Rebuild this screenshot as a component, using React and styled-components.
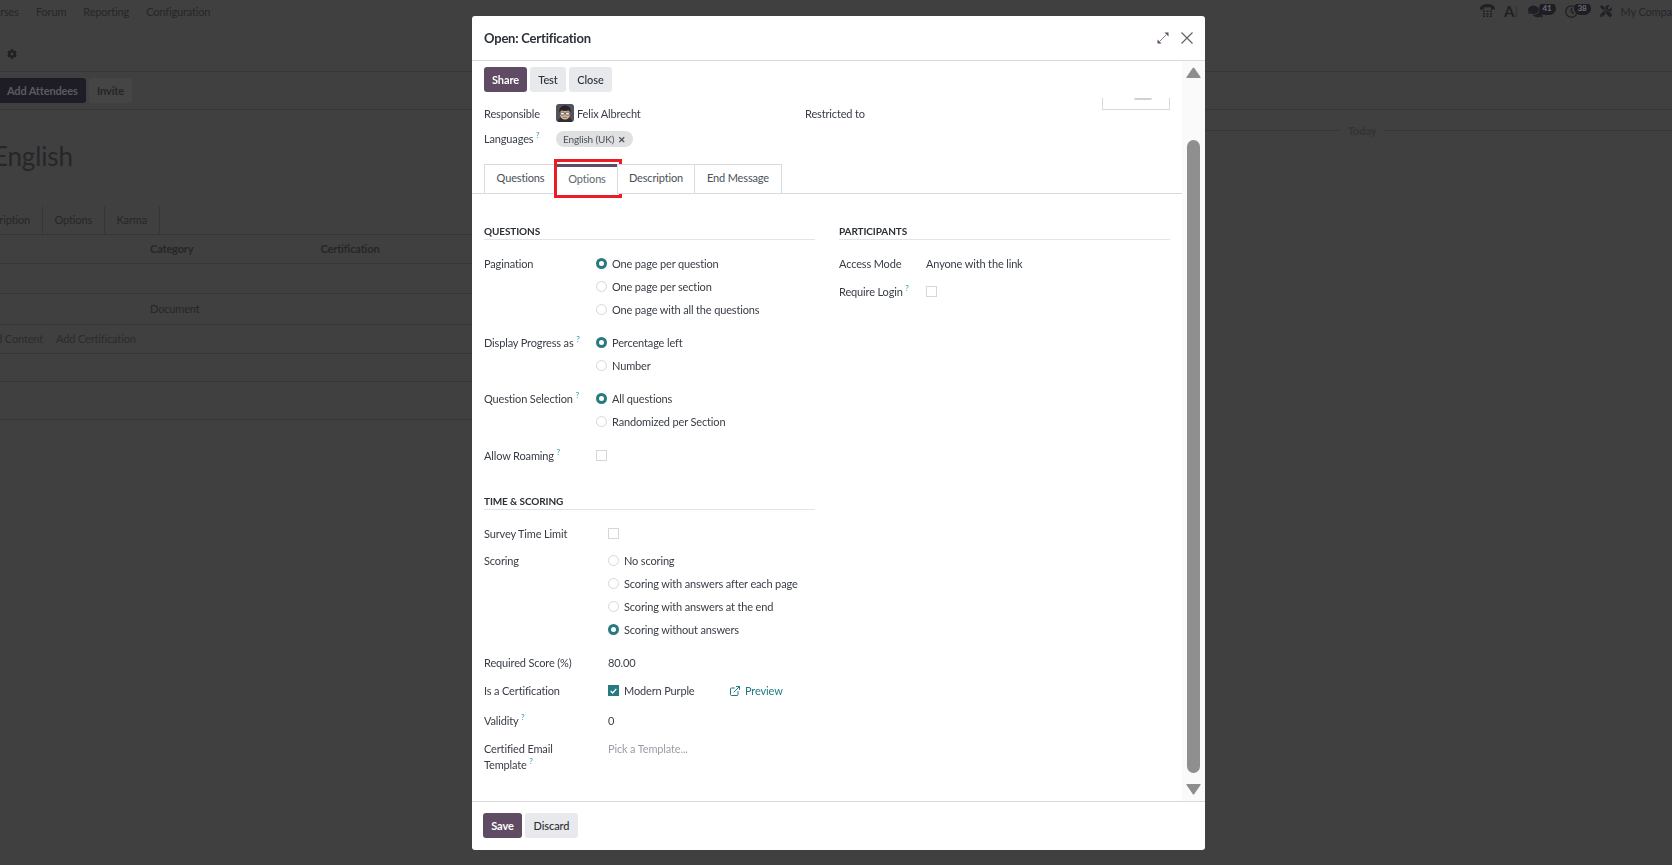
import styled, { createGlobalStyle } from "styled-components";
import { FaCog, FaComments, FaRegClock, FaTools } from "react-icons/fa";
import { FiExternalLink } from "react-icons/fi";

const GlobalStyle = createGlobalStyle`
  html, body {
    margin: 0;
    height: 100%;
    overflow: hidden;
    background: #404040;
    font-family: Lato, "Noto Sans", sans-serif;
    font-size: 11px;
    letter-spacing: -0.15px;
    color: #383d45;
  }
  * { box-sizing: border-box; }
`;

const questionGroups = [
  { label: "Pagination", options: ["One page per question", "One page per section", "One page with all the questions"], checked: 0 },
  { label: "Display Progress as", hint: true, options: ["Percentage left", "Number"], checked: 0 },
  { label: "Question Selection", hint: true, options: ["All questions", "Randomized per Section"], checked: 0 },
];

const scoringOptions = [
  "No scoring",
  "Scoring with answers after each page",
  "Scoring with answers at the end",
  "Scoring without answers",
];

function Hint() {
  return <Sup>?</Sup>;
}

function RadioList({ options, checked }) {
  return (
    <Options>
      {options.map((option, index) => (
        <RadioRow key={option}>
          <Radio $checked={index === checked} />
          {option}
        </RadioRow>
      ))}
    </Options>
  );
}

function DeskPhone() {
  return (
    <svg width="15" height="14" viewBox="0 0 15 14" fill="#1f1f24">
      <path d="M0 4C1 1 4 0 7.500 0S14 1 15 4v1.500h-4V3.600C9 3 6 3 4 3.600V5.500H0z" />
      <rect x="3" y="6.500" width="2" height="1.500" />
      <rect x="6.500" y="6.500" width="2" height="1.500" />
      <rect x="10" y="6.500" width="2" height="1.500" />
      <rect x="3" y="9" width="2" height="1.500" />
      <rect x="6.500" y="9" width="2" height="1.500" />
      <rect x="10" y="9" width="2" height="1.500" />
      <rect x="3" y="11.500" width="2" height="1.500" />
      <rect x="6.500" y="11.500" width="2" height="1.500" />
      <rect x="10" y="11.500" width="2" height="1.500" />
    </svg>
  );
}

function AvatarFace() {
  return (
    <svg width="18" height="18" viewBox="0 0 18 18">
      <rect width="18" height="18" rx="3" fill="#55505a" />
      <path d="M2 18c0-4 3-5 7-5s7 1 7 5z" fill="#2f2e36" />
      <ellipse cx="9" cy="10" rx="5" ry="5.500" fill="#dcb79c" />
      <path d="M3.500 8.500C2.500 3.500 6 1.500 9 1.500s6.500 2 5.500 7L13 6.500C11 7 7 7 5 6.500z" fill="#26242a" />
      <rect x="4.600" y="8.200" width="3.800" height="2.800" rx="0.800" fill="#f5f0ea" stroke="#333" strokeWidth="0.700" />
      <rect x="9.600" y="8.200" width="3.800" height="2.800" rx="0.800" fill="#f5f0ea" stroke="#333" strokeWidth="0.700" />
      <path d="M7 13.300h4" stroke="#8a5a4a" strokeWidth="0.800" />
    </svg>
  );
}

function ExpandIcon() {
  return (
    <svg width="12" height="12" viewBox="0 0 12 12">
      <path d="M3 9L9 3" stroke="#8d7f90" strokeWidth="1" />
      <path d="M7.500 0.500H11.500V4.500z" fill="#5f4b63" />
      <path d="M0.500 7.500V11.500H4.500z" fill="#5f4b63" />
    </svg>
  );
}

function CloseIcon() {
  return (
    <svg width="12" height="12" viewBox="0 0 12 12" stroke="#5c5f66" strokeWidth="1.100" fill="none">
      <path d="M0.500 0.500l11 11M11.500 0.500l-11 11" />
    </svg>
  );
}

function Arrow({ down }) {
  return (
    <svg width="15" height="11" viewBox="0 0 15 11" fill="#8e8e8e">
      <path d={down ? "M1 0h13q1 0 .5 1L8.300 10q-.8 1-1.600 0L.5 1Q0 0 1 0z" : "M1 11h13q1 0 .5-1L8.300 1q-.8-1-1.600 0L.5 10q-.5 1 .5 1z"} />
    </svg>
  );
}

export default function App() {
  return (
    <>
      <GlobalStyle />
      <Page>
        <TopNav>
          <NavLinks>
            <span>Courses</span>
            <span>Forum</span>
            <span>Reporting</span>
            <span>Configuration</span>
          </NavLinks>
          <Systray>
            <DeskPhone />
            <AiMark>A<span>I</span></AiMark>
            <TrayCounter>
              <FaComments size={15} />
              <Count>41</Count>
            </TrayCounter>
            <TrayCounter>
              <FaRegClock size={13} />
              <Count>38</Count>
            </TrayCounter>
            <FaTools size={12} />
            <Company>My Company</Company>
          </Systray>
        </TopNav>
        <Breadcrumb>
          <FaCog size={10} />
        </Breadcrumb>
        <BgActions>
          <BgPrimary>Add Attendees</BgPrimary>
          <BgSecondary>Invite</BgSecondary>
        </BgActions>
        <BgMain>
          <BgForm>
            <BgTitle>English</BgTitle>
            <BgTabs>
              <BgTab $width={43}>Description</BgTab>
              <BgTab $width={62}>Options</BgTab>
              <BgTab $width={55}>Karma</BgTab>
            </BgTabs>
            <BgHeadRow>
              <BgColumn $left={150} $head>Category</BgColumn>
              <BgColumn $left={127} $head>Certification</BgColumn>
            </BgHeadRow>
            <BgRow $height={30} />
            <BgRow $height={31}>
              <BgColumn $left={150}>Document</BgColumn>
            </BgRow>
            <BgRow $height={29}>
              <BgLinkText $left={-17}>Add Content</BgLinkText>
              <BgLinkText $left={13}>Add Certification</BgLinkText>
            </BgRow>
            <BgRow $height={28} />
            <BgRow $height={38} />
          </BgForm>
          <Chatter>
            <TodayLine>Today</TodayLine>
          </Chatter>
        </BgMain>
      </Page>

      <Dialog>
        <DialogHeader>
          <DialogTitle>Open: Certification</DialogTitle>
          <HeaderIcons>
            <ExpandIcon />
            <CloseIcon />
          </HeaderIcons>
        </DialogHeader>
        <DialogBody>
          <Content>
            <ActionBar>
              <Button $primary $width={43}>Share</Button>
              <Button $width={36}>Test</Button>
              <Button $width={43}>Close</Button>
            </ActionBar>
            <SheetTop>
              <TopFields>
                <TopRow>
                  <TopLabel>Responsible</TopLabel>
                  <Person>
                    <AvatarFace />
                    Felix Albrecht
                  </Person>
                  <Restricted>Restricted to</Restricted>
                </TopRow>
                <TopRow>
                  <TopLabel>Languages <Hint /></TopLabel>
                  <Chip>English (UK) <ChipClose>✕</ChipClose></Chip>
                </TopRow>
              </TopFields>
              <ImageBox><ImageArc /></ImageBox>
            </SheetTop>
            <Tabs>
              <Tab $width={73}>Questions</Tab>
              <Tab $width={62} $active>Options</Tab>
              <Tab $width={78}>Description</Tab>
              <Tab $width={88}>End Message</Tab>
            </Tabs>
            <Columns>
              <div>
                <SectionHead>QUESTIONS</SectionHead>
                {questionGroups.map((group, index) => (
                  <Field key={group.label} $labelWidth={112} $top={index === 0 ? 13 : 10}>
                    <FieldLabel>{group.label} {group.hint && <Hint />}</FieldLabel>
                    <RadioList options={group.options} checked={group.checked} />
                  </Field>
                ))}
                <Field $labelWidth={112} $top={11}>
                  <FieldLabel>Allow Roaming <Hint /></FieldLabel>
                  <FieldValue><Checkbox /></FieldValue>
                </Field>

                <SectionHead $top={26}>TIME &amp; SCORING</SectionHead>
                <Field $labelWidth={124} $top={13}>
                  <FieldLabel>Survey Time Limit</FieldLabel>
                  <FieldValue><Checkbox /></FieldValue>
                </Field>
                <Field $labelWidth={124} $top={4}>
                  <FieldLabel>Scoring</FieldLabel>
                  <RadioList options={scoringOptions} checked={3} />
                </Field>
                <Field $labelWidth={124} $top={10}>
                  <FieldLabel>Required Score (%)</FieldLabel>
                  <FieldValue>80.00</FieldValue>
                </Field>
                <Field $labelWidth={124} $top={5}>
                  <FieldLabel>Is a Certification</FieldLabel>
                  <FieldValue>
                    <Checkbox $checked>
                      <svg width="7" height="6" viewBox="0 0 7 6" fill="none" stroke="#fff" strokeWidth="1.300">
                        <path d="M0.700 3l2 2L6.300 0.800" />
                      </svg>
                    </Checkbox>
                    <CertName>Modern Purple</CertName>
                    <PreviewLink>
                      <FiExternalLink size={12} />
                      Preview
                    </PreviewLink>
                  </FieldValue>
                </Field>
                <Field $labelWidth={124} $top={7}>
                  <FieldLabel>Validity <Hint /></FieldLabel>
                  <FieldValue>0</FieldValue>
                </Field>
                <Field $labelWidth={124} $top={5}>
                  <FieldLabel $wrap>Certified Email Template <Hint /></FieldLabel>
                  <FieldValue $muted>Pick a Template...</FieldValue>
                </Field>
              </div>
              <div>
                <SectionHead>PARTICIPANTS</SectionHead>
                <Field $labelWidth={87} $top={13}>
                  <FieldLabel>Access Mode</FieldLabel>
                  <FieldValue>Anyone with the link</FieldValue>
                </Field>
                <Field $labelWidth={87} $top={5}>
                  <FieldLabel>Require Login <Hint /></FieldLabel>
                  <FieldValue><Checkbox /></FieldValue>
                </Field>
              </div>
            </Columns>
          </Content>
          <ScrollTrack>
            <Arrow />
            <ScrollThumb />
            <Arrow down />
          </ScrollTrack>
        </DialogBody>
        <DialogFooter>
          <Button $primary $width={39}>Save</Button>
          <Button $width={53}>Discard</Button>
        </DialogFooter>
      </Dialog>
    </>
  );
}

const Page = styled.div`
  height: 865px;
  overflow: hidden;
  color: #26262a;
`;

const TopNav = styled.div`
  height: 22px;
  display: flex;
  justify-content: space-between;
  align-items: center;
`;

const NavLinks = styled.div`
  display: flex;
  gap: 17px;
  margin-left: -19px;
`;

const Systray = styled.div`
  display: flex;
  align-items: center;
  gap: 9px;
  width: 192px;
  overflow: hidden;
  white-space: nowrap;
  color: #1f1f24;

  > * {
    flex-shrink: 0;
  }
`;

const AiMark = styled.b`
  font-size: 15px;
  line-height: 1;
  color: #1f1f24;

  span {
    color: #36363a;
  }
`;

const TrayCounter = styled.div`
  display: flex;
  align-items: center;
`;

const Count = styled.span`
  min-width: 17px;
  height: 13px;
  margin: -6px 0 0 -4px;
  border-radius: 7px;
  background: #1d1d24;
  color: #6f6f73;
  font-size: 8px;
  font-weight: 700;
  line-height: 13px;
  text-align: center;
`;

const Company = styled.span`
  color: #26262a;
`;

const Breadcrumb = styled.div`
  height: 50px;
  padding: 26px 0 0 7px;
  border-bottom: 1px solid #363636;
  color: #1f1f24;
`;

const BgActions = styled.div`
  height: 38px;
  display: flex;
  align-items: center;
  gap: 3px;
  padding-bottom: 1px;
  border-bottom: 1px solid #363636;
`;

const BgPrimary = styled.div`
  width: 86px;
  height: 25px;
  padding-left: 7px;
  border-radius: 0 3px 3px 0;
  background: #1e1d26;
  color: #5b5a60;
  font-weight: 700;
  line-height: 25px;
  white-space: nowrap;
`;

const BgSecondary = styled.div`
  width: 43px;
  height: 25px;
  border-radius: 3px;
  background: #454545;
  font-weight: 700;
  line-height: 25px;
  text-align: center;
`;

const BgMain = styled.div`
  display: flex;
`;

const BgForm = styled.div`
  width: 1205px;
  flex-shrink: 0;
`;

const BgTitle = styled.h1`
  height: 96px;
  margin: 0 0 0 -7px;
  padding-top: 27px;
  font-size: 26px;
  font-weight: 400;
  line-height: 38px;
`;

const BgTabs = styled.div`
  height: 29px;
  display: flex;
  border-bottom: 1px solid #363636;
`;

const BgTab = styled.div`
  width: ${(p) => p.$width}px;
  border-right: 1px solid #363636;
  line-height: 28px;
  white-space: nowrap;
  display: flex;
  justify-content: flex-end;
  padding-right: 12px;
`;

const BgHeadRow = styled.div`
  height: 29px;
  display: flex;
  align-items: center;
  padding-bottom: 2px;
  border-bottom: 1px solid #363636;
`;

const BgRow = styled.div`
  height: ${(p) => p.$height}px;
  display: flex;
  align-items: center;
  padding-bottom: 2px;
  border-bottom: 1px solid #363636;
`;

const BgColumn = styled.span`
  margin-left: ${(p) => p.$left}px;
  font-weight: ${(p) => (p.$head ? 700 : 400)};
`;

const BgLinkText = styled.span`
  margin-left: ${(p) => p.$left || 0}px;
  color: #2b2b2f;
  white-space: nowrap;
`;

const Chatter = styled.div`
  flex: 1;
  padding: 14px 0 0;
`;

const TodayLine = styled.div`
  display: flex;
  align-items: center;
  gap: 8px;
  color: #333336;
  font-size: 11px;
  font-weight: 700;

  &::before,
  &::after {
    content: "";
    flex: 1;
    border-top: 1px solid #363636;
  }

  &::before {
    flex: 0 0 135px;
  }
`;

const Dialog = styled.div`
  position: fixed;
  top: 16px;
  left: 472px;
  width: 733px;
  height: 834px;
  display: flex;
  flex-direction: column;
  border-radius: 3px;
  background: #fff;
  overflow: hidden;
`;

const DialogHeader = styled.header`
  height: 45px;
  flex-shrink: 0;
  display: flex;
  align-items: center;
  justify-content: space-between;
  padding: 0 12px;
  border-bottom: 1px solid #d8dadd;
`;

const DialogTitle = styled.h4`
  margin: 0;
  color: #2b2f36;
  font-size: 13px;
  font-weight: 700;
  letter-spacing: -0.2px;
`;

const HeaderIcons = styled.div`
  display: flex;
  align-items: center;
  gap: 12px;
`;

const DialogBody = styled.div`
  flex: 1;
  min-height: 0;
  display: flex;
`;

const Content = styled.div`
  flex: 1;
  min-width: 0;
`;

const ActionBar = styled.div`
  height: 37px;
  display: flex;
  gap: 3px;
  padding: 6px 12px 0;
`;

const Button = styled.button`
  width: ${(p) => p.$width}px;
  height: 25px;
  padding: 0 0 1px;
  border: 0;
  border-radius: 3px;
  background: ${(p) => (p.$primary ? "#5f4b63" : "#e7e9ed")};
  color: ${(p) => (p.$primary ? "#fff" : "#2b2f36")};
  font-family: inherit;
  font-size: 11px;
  font-weight: ${(p) => (p.$primary ? 700 : 500)};
  letter-spacing: -0.1px;
`;

const SheetTop = styled.div`
  display: flex;
  justify-content: space-between;
  padding: 0 12px;
`;

const TopFields = styled.div`
  flex: 1;
  padding-top: 4px;
  display: flex;
  flex-direction: column;
  gap: 3px;
`;

const TopRow = styled.div`
  height: 22px;
  display: flex;
  align-items: center;
`;

const TopLabel = styled.div`
  width: 72px;
  flex-shrink: 0;
  white-space: nowrap;
`;

const Person = styled.div`
  width: 249px;
  display: flex;
  align-items: center;
  gap: 3px;
`;

const Restricted = styled.div``;

const Chip = styled.span`
  height: 16px;
  margin-top: 2px;
  display: inline-flex;
  align-items: center;
  gap: 4px;
  padding: 0 7px;
  border-radius: 8px;
  background: #dfe0e2;
  color: #4b5058;
  font-size: 10px;
`;

const ChipClose = styled.span`
  font-size: 9px;
  font-weight: 700;
`;

const ImageBox = styled.div`
  width: 68px;
  height: 12px;
  display: flex;
  justify-content: center;
  border: 1px solid #d8dadd;
  border-top: 0;
`;

const ImageArc = styled.div`
  width: 18px;
  height: 2px;
  margin-left: 14px;
  border-radius: 0 0 9px 9px;
  background: #cfd0d2;
`;

const Tabs = styled.div`
  height: 30px;
  margin-top: 15px;
  display: flex;
  padding-left: 12px;
  border-bottom: 1px solid #d8dadd;
`;

const Tab = styled.div`
  position: relative;
  width: ${(p) => p.$width}px;
  height: 30px;
  margin-right: -1px;
  border: 1px solid #d8dadd;
  border-top: ${(p) => (p.$active ? "3px solid #5f4b63" : "1px solid #d8dadd")};
  border-bottom: ${(p) => (p.$active ? "1px solid #fff" : "1px solid #d8dadd")};
  background: #fff;
  color: ${(p) => (p.$active ? "#63676e" : "#4b5058")};
  line-height: ${(p) => (p.$active ? 24 : 26)}px;
  text-align: center;

  ${(p) =>
    p.$active &&
    `&::after {
      content: "";
      position: absolute;
      top: -8px;
      left: -3px;
      right: -5px;
      bottom: -5px;
      border: 3px solid #ed1c24;
    }`}
`;

const Columns = styled.div`
  display: grid;
  grid-template-columns: 331px 331px;
  column-gap: 24px;
  padding: 30px 12px 0;
`;

const SectionHead = styled.div`
  height: 16px;
  margin-top: ${(p) => p.$top || 0}px;
  border-bottom: 1px solid #e2e4e7;
  color: #2b2f36;
  font-size: 10px;
  font-weight: 700;
  letter-spacing: -0.1px;
  line-height: 15px;
`;

const Field = styled.div`
  margin-top: ${(p) => p.$top}px;
  display: grid;
  grid-template-columns: ${(p) => p.$labelWidth}px 1fr;
`;

const FieldLabel = styled.div`
  min-height: 23px;
  padding-top: 3px;
  line-height: 16px;
  white-space: ${(p) => (p.$wrap ? "normal" : "nowrap")};
  max-width: ${(p) => (p.$wrap ? "90px" : "none")};
`;

const FieldValue = styled.div`
  min-height: 21px;
  display: flex;
  align-items: center;
  color: ${(p) => (p.$muted ? "#9a9da3" : "#383d45")};
  align-self: start;
`;

const Options = styled.div`
  display: flex;
  flex-direction: column;
`;

const RadioRow = styled.div`
  height: 23px;
  padding-bottom: 2px;
  display: flex;
  align-items: center;
  gap: 5px;
  white-space: nowrap;
`;

const Radio = styled.span`
  width: 11px;
  height: 11px;
  flex-shrink: 0;
  border-radius: 50%;
  border: ${(p) => (p.$checked ? "3.500px solid #277b80" : "1px solid #d5d7da")};
  background: #fff;
`;

const Checkbox = styled.span`
  width: 11px;
  height: 11px;
  display: inline-flex;
  align-items: center;
  justify-content: center;
  flex-shrink: 0;
  border: 1px solid ${(p) => (p.$checked ? "#277b80" : "#d5d7da")};
  background: ${(p) => (p.$checked ? "#277b80" : "#fff")};
`;

const CertName = styled.span`
  width: 105px;
  margin-left: 5px;
`;

const PreviewLink = styled.span`
  display: inline-flex;
  align-items: center;
  gap: 4px;
  color: #1f7a84;
`;

const Sup = styled.sup`
  color: #2a9aa5;
  font-size: 8px;
  line-height: 0;
`;

const ScrollTrack = styled.div`
  width: 23px;
  flex-shrink: 0;
  display: flex;
  flex-direction: column;
  align-items: center;
  padding: 6px 0;
  background: #fafafa;
`;

const ScrollThumb = styled.div`
  width: 13px;
  height: 633px;
  margin: 62px 0 11px;
  border-radius: 7px;
  background: #8f8f8f;
`;

const DialogFooter = styled.footer`
  height: 49px;
  flex-shrink: 0;
  display: flex;
  gap: 3px;
  padding: 11px 11px 0;
  border-top: 1px solid #d8dadd;
`;
